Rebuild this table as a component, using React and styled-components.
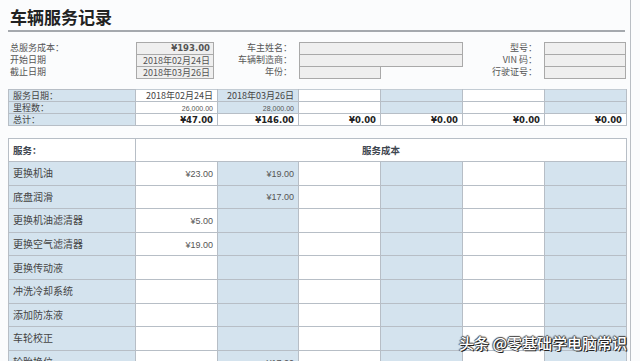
import styled, { createGlobalStyle } from 'styled-components';

const GlobalStyle = createGlobalStyle`
  html, body {
    margin: 0;
    padding: 0;
    background: #fbfcfd;
    overflow: hidden;
  }
  body {
    font-family: "Noto Sans CJK SC", "Noto Sans", sans-serif;
    color: #333;
  }
`;

const Sheet = styled.div`
  position: relative;
  width: 631px;
  height: 361px;
  overflow: hidden;
  border-right: 1px solid #b9bec4;
  padding-left: 8px;
  box-sizing: border-box;
`;

const Title = styled.h1`
  margin: 0;
  padding: 7px 0 0 2px;
  height: 32px;
  box-sizing: border-box;
  font-size: 17px;
  line-height: 20px;
  font-weight: 700;
  color: #222;
  border-bottom: 2px solid #a5a9ae;
  width: 617px;
`;

const InfoGrid = styled.div`
  display: grid;
  grid-template-columns: 128px 78px 85px 164px 81px 82px;
  grid-auto-rows: 12px;
  margin-top: 10px;
  font-size: 9px;
  line-height: 12px;
`;

const InfoLabel = styled.div`
  color: #555;
  padding-left: ${p => (p.$right ? 0 : 2)}px;
  padding-right: ${p => (p.$right ? 7 : 0)}px;
  text-align: ${p => (p.$right ? 'right' : 'left')};
  white-space: nowrap;
`;

const InfoBox = styled.div`
  background: #efefef;
  border: 1px solid #a9a9a9;
  box-sizing: border-box;
  height: 13px;
  line-height: 11px;
  text-align: right;
  padding-right: 3px;
  color: #555;
  font-weight: ${p => (p.$bold ? 700 : 400)};
  font-family: ${p => (p.$bold ? '"DejaVu Sans", sans-serif' : 'inherit')};
  font-size: ${p => (p.$bold ? 8.5 : 9)}px;
  width: ${p => p.$w || 'auto'};
`;

const Table = styled.table`
  border-collapse: collapse;
  table-layout: fixed;
  width: 618px;
  margin-top: ${p => p.$top}px;
  font-size: ${p => p.$font || 9}px;
`;

const Cell = styled.td`
  height: ${p => p.$h}px;
  padding: 0 4px;
  box-sizing: border-box;
  background: ${p => (p.$blue ? '#d4e3ee' : '#ffffff')};
  border: 1px solid #b7bec6;
  border-top-color: ${p => (p.$soft ? '#c3ccd4' : '#b7bec6')};
  text-align: ${p => p.$align || 'right'};
  color: #444;
  white-space: nowrap;
  overflow: hidden;
  line-height: 1;
`;

const Num = styled.span`
  font-family: ${p => (p.$bold ? '"DejaVu Sans"' : '"Liberation Sans"')}, sans-serif;
  font-weight: ${p => (p.$bold ? 700 : 400)};
  font-size: ${p => p.$size || 9}px;
  color: ${p => (p.$bold ? '#222' : '#555')};
`;

const Head = styled.span`
  font-weight: 700;
  color: #3e4650;
  font-size: 9.5px;
`;

const Watermark = styled.div`
  position: absolute;
  right: 3px;
  bottom: 8px;
  font-size: 15px;
  font-weight: 500;
  color: #fff;
  text-shadow: 1px 1px 0 #222, -1px 0 1px #444, 0 -1px 1px #444, 1px 0 1px #444;
  white-space: nowrap;
`;

const COLS = [127, 82, 81, 82, 82, 82, 82];

const blueRows = [
  { label: '服务日期：', vals: ['2018年02月24日', '2018年03月26日', '', '', '', ''] },
  { label: '里程数：', vals: ['26,000.00', '28,000.00', '', '', '', ''], small: true },
];

const totals = ['¥47.00', '¥146.00', '¥0.00', '¥0.00', '¥0.00', '¥0.00'];

const services = [
  ['更换机油', '¥23.00', '¥19.00'],
  ['底盘润滑', '', '¥17.00'],
  ['更换机油滤清器', '¥5.00', ''],
  ['更换空气滤清器', '¥19.00', ''],
  ['更换传动液', '', ''],
  ['冲洗冷却系统', '', ''],
  ['添加防冻液', '', ''],
  ['车轮校正', '', ''],
  ['轮胎换位', '', '¥17.00'],
];

function Cols() {
  return (
    <colgroup>
      {COLS.map((w, i) => (
        <col key={i} style={{ width: w }} />
      ))}
    </colgroup>
  );
}

export default function App() {
  return (
    <Sheet>
      <GlobalStyle />
      <Title>车辆服务记录</Title>

      <InfoGrid>
        <InfoLabel>总服务成本：</InfoLabel>
        <InfoBox $bold>¥193.00</InfoBox>
        <InfoLabel $right>车主姓名：</InfoLabel>
        <InfoBox />
        <InfoLabel $right>型号：</InfoLabel>
        <InfoBox />

        <InfoLabel>开始日期</InfoLabel>
        <InfoBox>2018年02月24日</InfoBox>
        <InfoLabel $right>车辆制造商：</InfoLabel>
        <InfoBox />
        <InfoLabel $right>VIN 码：</InfoLabel>
        <InfoBox />

        <InfoLabel>截止日期</InfoLabel>
        <InfoBox>2018年03月26日</InfoBox>
        <InfoLabel $right>年份：</InfoLabel>
        <InfoBox $w="82px" />
        <InfoLabel $right>行驶证号：</InfoLabel>
        <InfoBox />
      </InfoGrid>

      <Table $top={11}>
        <Cols />
        <tbody>
          {blueRows.map(r => (
            <tr key={r.label}>
              <Cell $h={12} $blue $align="left">{r.label}</Cell>
              {r.vals.map((v, i) => (
                <Cell key={i} $h={12} $blue={i % 2 === 1} $soft>
                  {r.small ? <Num $size={7}>{v}</Num> : <span>{v}</span>}
                </Cell>
              ))}
            </tr>
          ))}
          <tr>
            <Cell $h={12} $blue $align="left">总计：</Cell>
            {totals.map((v, i) => (
              <Cell key={i} $h={12}>
                <Num $bold $size={8.5}>{v}</Num>
              </Cell>
            ))}
          </tr>
        </tbody>
      </Table>

      <Table $top={12} $font={10}>
        <Cols />
        <tbody>
          <tr>
            <Cell $h={23} $align="left"><Head>服务：</Head></Cell>
            <Cell $h={23} colSpan={6} $align="center"><Head>服务成本</Head></Cell>
          </tr>
          {services.map(([label, a, b]) => (
            <tr key={label}>
              <Cell $h={23.6} $blue $align="left">{label}</Cell>
              <Cell $h={23.6}><Num>{a}</Num></Cell>
              <Cell $h={23.6} $blue><Num>{b}</Num></Cell>
              <Cell $h={23.6} />
              <Cell $h={23.6} $blue />
              <Cell $h={23.6} />
              <Cell $h={23.6} $blue />
            </tr>
          ))}
        </tbody>
      </Table>

      <Watermark>头条 @零基础学电脑常识</Watermark>
    </Sheet>
  );
}
